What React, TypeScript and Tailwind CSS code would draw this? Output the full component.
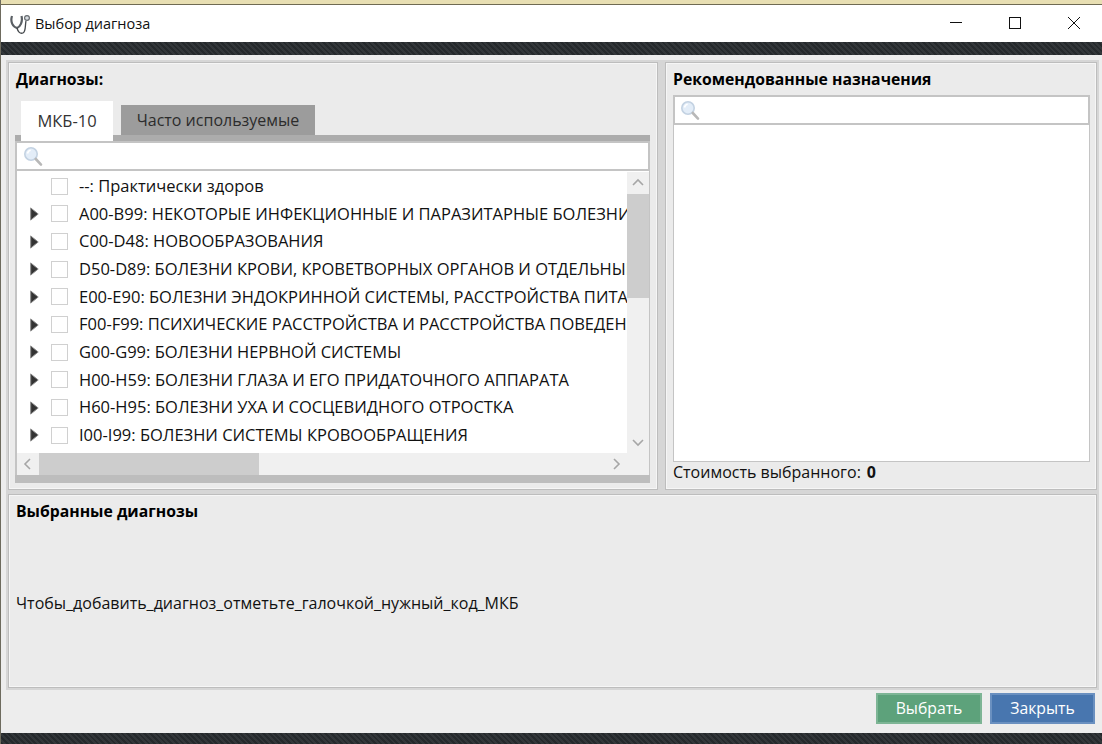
import React from "react";

const FONT = "font-['Open_Sans','Noto_Sans',sans-serif]";
const HATCH = "bg-[repeating-linear-gradient(45deg,#25292c_0px,#25292c_2px,#33373a_2px,#33373a_4px)]";
const PANEL = "border border-[#bdbdbd] shadow-[inset_0_0_0_1px_#f6f6f6] bg-[#ebebeb]";

const rows = [
  { text: "--: Практически здоров", arrow: false },
  { text: "A00-B99: НЕКОТОРЫЕ ИНФЕКЦИОННЫЕ И ПАРАЗИТАРНЫЕ БОЛЕЗНИ", arrow: true },
  { text: "C00-D48: НОВООБРАЗОВАНИЯ", arrow: true },
  { text: "D50-D89: БОЛЕЗНИ КРОВИ, КРОВЕТВОРНЫХ ОРГАНОВ И ОТДЕЛЬНЫЕ НАРУШЕНИЯ", arrow: true },
  { text: "E00-E90: БОЛЕЗНИ ЭНДОКРИННОЙ СИСТЕМЫ, РАССТРОЙСТВА ПИТАНИЯ", arrow: true },
  { text: "F00-F99: ПСИХИЧЕСКИЕ РАССТРОЙСТВА И РАССТРОЙСТВА ПОВЕДЕНИЯ", arrow: true },
  { text: "G00-G99: БОЛЕЗНИ НЕРВНОЙ СИСТЕМЫ", arrow: true },
  { text: "H00-H59: БОЛЕЗНИ ГЛАЗА И ЕГО ПРИДАТОЧНОГО АППАРАТА", arrow: true },
  { text: "H60-H95: БОЛЕЗНИ УХА И СОСЦЕВИДНОГО ОТРОСТКА", arrow: true },
  { text: "I00-I99: БОЛЕЗНИ СИСТЕМЫ КРОВООБРАЩЕНИЯ", arrow: true },
];

const SearchIcon = () => (
  <svg width="20" height="21" viewBox="0 0 20 21" fill="none">
    <circle cx="8" cy="8" r="6.2" fill="#e3edf8" stroke="#c3d2e2" strokeWidth="1.6" />
    <path d="M4.5 7.5a4 4 0 0 1 3.2-3.2" stroke="#ffffff" strokeWidth="1.6" />
    <path d="M12.8 13L18 18.6" stroke="#b8b8b8" strokeWidth="2.6" strokeLinecap="round" />
  </svg>
);

const SearchBox = ({ className }: { className: string }) => (
  <div className={`flex items-center shrink-0 bg-white border-2 border-[#c4c4c4] h-[30px] ${className}`}>
    <SearchIcon />
  </div>
);

const Stethoscope = () => (
  <svg width="20" height="22" viewBox="0 0 20 22" fill="none">
    <path d="M2 3C0 9 3 14 7 15C10 14 13 9 11.5 3" stroke="#5a5f64" strokeWidth="2.2" />
    <path d="M7 15C8 19 10 21 13 20C16 19 15 12 16 8" stroke="#44484c" strokeWidth="1.3" />
    <circle cx="17" cy="5" r="2.4" fill="#d8dde2" stroke="#666b70" strokeWidth="1.2" />
  </svg>
);

const Chevron = ({ d }: { d: string }) => (
  <svg width="12" height="12" viewBox="0 0 12 12" fill="none">
    <path d={d} stroke="#a6a6a6" strokeWidth="1.6" />
  </svg>
);

const TreeRow = ({ text, arrow }: { text: string; arrow: boolean }) => (
  <div className="flex items-center h-[27.67px] shrink-0">
    <div className="w-[34px] pl-[13px] shrink-0 flex items-center">
      {arrow && (
        <svg width="9" height="14" viewBox="0 0 9 14">
          <path d="M0.7 0.9L8.2 7L0.7 13.1Z" fill="#333" stroke="#8a8a8a" strokeWidth="1" />
        </svg>
      )}
    </div>
    <div className="w-[17px] h-[17px] border border-[#d0d0d0] bg-white shrink-0" />
    <span className="ml-[11px] whitespace-nowrap text-[16.5px] text-[#111]">{text}</span>
  </div>
);

export default function App() {
  return (
    <div className={`${FONT} w-[1102px] h-[744px] overflow-hidden flex flex-col bg-[#ededed] text-black border-l border-[#6e6b5e]`}>
      <div className="h-[4px] bg-[#e8dfb3] border-b border-[#6f6a52] box-content shrink-0" />
      {/* title bar */}
      <div className="h-[37px] bg-white flex items-center pl-[9px] shrink-0">
        <Stethoscope />
        <span className="ml-[5px] text-[14.5px] text-[#111]">Выбор диагноза</span>
        <div className="ml-auto flex items-center pb-[1px] pr-[22px] gap-[47px]">
          <svg width="12" height="12" viewBox="0 0 12 12">
            <path d="M0 5.5H12" stroke="#111" strokeWidth="1" />
          </svg>
          <svg width="12" height="12" viewBox="0 0 12 12">
            <rect x="0.5" y="0.5" width="11" height="11" fill="none" stroke="#111" strokeWidth="1" />
          </svg>
          <svg width="12" height="12" viewBox="0 0 12 12">
            <path d="M0 0L12 12M12 0L0 12" stroke="#111" strokeWidth="1" />
          </svg>
        </div>
      </div>
      <div className={`h-[13px] shrink-0 ${HATCH}`} />

      <div className="flex-1 flex flex-col min-h-0 pt-[5px]">
        <div className="ml-[5px] w-[1093px] shrink-0 p-[2px] bg-[#d6d6d6] flex flex-col gap-[4px]">
          <div className="flex gap-[7px] h-[428px]">
            {/* left panel */}
            <div className={`w-[650px] flex flex-col pl-[6px] pr-[7px] ${PANEL}`}>
              <div className="h-[32px] shrink-0 pt-[4px] pl-[1px] text-[15.75px] font-bold leading-[24px]">Диагнозы:</div>
              <div className="flex items-end h-[40px] shrink-0 pl-[6px]">
                <div className="w-[92px] h-[40px] bg-white flex items-center justify-center text-[16.5px] text-[#333] relative z-10 -mb-[6px]">МКБ-10</div>
                <div className="w-[194px] h-[30px] ml-[8px] bg-[#9c9c9c] flex items-center justify-center text-[16px] text-[#2c2c2c]">Часто используемые</div>
              </div>
              <div className="h-[6px] shrink-0 bg-[#acacac]" />
              <SearchBox className="pl-[6px]" />
              <div className="h-[304px] shrink-0 bg-white border-l-2 border-r border-[#c4c4c4] flex flex-col">
                <div className="flex-1 min-h-0 flex overflow-hidden">
                  <div className="flex-1 min-w-0 overflow-hidden flex flex-col pt-[1.5px]">
                    {rows.map((r) => (
                      <TreeRow key={r.text} text={r.text} arrow={r.arrow} />
                    ))}
                  </div>
                  {/* vertical scrollbar */}
                  <div className="w-[22px] shrink-0 mt-[1px] bg-[#f0f0f0] flex flex-col">
                    <div className="h-[22px] flex items-center justify-center"><Chevron d="M1 8L6 3L11 8" /></div>
                    <div className="h-[104px] bg-[#cdcdcd]" />
                    <div className="flex-1" />
                    <div className="h-[22px] flex items-center justify-center"><Chevron d="M1 4L6 9L11 4" /></div>
                  </div>
                </div>
                {/* horizontal scrollbar */}
                <div className="h-[22px] shrink-0 bg-[#f0f0f0] flex">
                  <div className="w-[22px] flex items-center justify-center"><Chevron d="M8 1L3 6L8 11" /></div>
                  <div className="w-[220px] bg-[#cdcdcd]" />
                  <div className="flex-1" />
                  <div className="w-[22px] mr-[22px] flex items-center justify-center"><Chevron d="M4 1L9 6L4 11" /></div>
                </div>
              </div>
              <div className="h-[8px] shrink-0 bg-[#bdbdbd]" />
            </div>

            {/* right panel */}
            <div className={`w-[432px] flex flex-col pl-[7px] pr-[6px] ${PANEL}`}>
              <div className="h-[32px] shrink-0 pt-[4px] text-[15.75px] font-bold leading-[24px]">Рекомендованные назначения</div>
              <SearchBox className="pl-[5px]" />
              <div className="h-[337px] bg-white border border-t-0 border-[#c4c4c4] shrink-0" />
              <div className="flex items-center h-[20px] text-[16px] text-[#111]">
                <span>Стоимость выбранного:</span>
                <span className="ml-[6px] font-bold">0</span>
              </div>
            </div>
          </div>

          {/* selected diagnoses */}
          <div className={`h-[194px] flex flex-col pl-[7px] ${PANEL}`}>
            <div className="h-[30px] shrink-0 pt-[4px] text-[15.75px] font-bold leading-[24px]">Выбранные диагнозы</div>
            <div className="mt-[68px] text-[16px] text-[#111] leading-[20px]">Чтобы_добавить_диагноз_отметьте_галочкой_нужный_код_МКБ</div>
          </div>
        </div>

        <div className="flex justify-end gap-[8px] mt-[3px] pr-[7px] shrink-0">
          <button className="w-[106px] h-[31px] bg-[#5da27b] border-2 border-[#7db595] text-white text-[15.75px]">Выбрать</button>
          <button className="w-[105px] h-[31px] bg-[#4876af] border-2 border-[#6a90c0] text-white text-[15.75px]">Закрыть</button>
        </div>
      </div>
      <div className={`h-[11px] shrink-0 ${HATCH}`} />
    </div>
  );
}
